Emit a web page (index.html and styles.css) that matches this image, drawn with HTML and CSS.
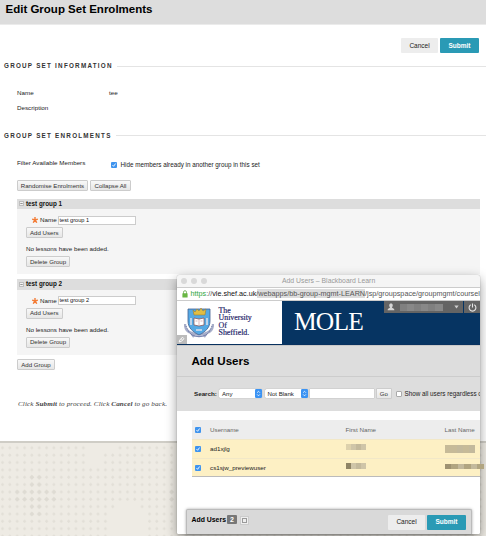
FILE: index.html
```html
<!DOCTYPE html>
<html lang="en">
<head>
<meta charset="utf-8">
<title>Edit Group Set Enrolments</title>
<link rel="stylesheet" href="styles.css">
</head>
<body>
<svg class="defs" width="0" height="0" aria-hidden="true">
  <symbol id="tick" viewBox="0 0 6 6"><rect width="6" height="6" rx="1" fill="#3f94ee"/><path d="M1.5 3.1l1.1 1.2 2-2.8" fill="none" stroke="#fff" stroke-width=".9"/></symbol>
  <symbol id="star" viewBox="0 0 6 6"><path d="M3 0v3M.1 2.1L3 3l2.9-.9M1.200 5.700L3 3l1.800 2.700" fill="none" stroke="#f37b35" stroke-width="1.400"/></symbol>
  <symbol id="minus" viewBox="0 0 5 5"><rect x=".4" y=".4" width="4.2" height="4.2" rx=".5" fill="#f2f2f2" stroke="#999" stroke-width=".6"/><path d="M1.3 2.5h2.4" stroke="#555" stroke-width=".6"/></symbol>
  <symbol id="updown" viewBox="0 0 7 9"><rect width="7" height="9" rx="1.2" fill="#3b93f3"/><path d="M2.1 3.7l1.4-1.4 1.4 1.4M2.1 5.4l1.4 1.4 1.4-1.4" fill="none" stroke="#fff" stroke-width=".8"/></symbol>
</svg>
<main class="page">
  <header class="page-head"><h1>Edit Group Set Enrolments</h1></header>
  <div class="actions"><button class="cancel">Cancel</button><button class="submit">Submit</button></div>
  <h2 class="section info"><span>GROUP SET INFORMATION</span></h2>
  <dl class="details">
    <dt>Name</dt><dd>tee</dd>
    <dt>Description</dt><dd></dd>
  </dl>
  <h2 class="section enrol"><span>GROUP SET ENROLMENTS</span></h2>
  <div class="filter"><span class="filter-label">Filter Available Members</span><svg class="check"><use href="#tick"/></svg><span class="filter-text">Hide members already in another group in this set</span></div>
  <div class="tools"><button class="btn b-random">Randomise Enrolments</button><button class="btn b-collapse">Collapse All</button></div>
  <section class="group">
    <h3><svg class="minus"><use href="#minus"/></svg>test group 1</h3>
    <div class="name-row"><svg class="star"><use href="#star"/></svg><span>Name</span><div class="field">test group 1</div></div>
    <button class="btn b-users">Add Users</button>
    <p>No lessons have been added.</p>
    <button class="btn b-delete">Delete Group</button>
  </section>
  <section class="group">
    <h3><svg class="minus"><use href="#minus"/></svg>test group 2</h3>
    <div class="name-row"><svg class="star"><use href="#star"/></svg><span>Name</span><div class="field">test group 2</div></div>
    <button class="btn b-users">Add Users</button>
    <p>No lessons have been added.</p>
    <button class="btn b-delete">Delete Group</button>
  </section>
  <button class="btn b-group">Add Group</button>
  <p class="hint">Click <b>Submit</b> to proceed. Click <b>Cancel</b> to go back.</p>
</main>
<svg class="texture" width="486" height="93" viewBox="0 0 486 93">
  <defs>
    <pattern id="dots" width="7.35" height="7.35" patternUnits="userSpaceOnUse"><path d="M2.5 3.1l1.7 1.8-1.7 1.8L.8 4.9z" fill="#e2dfd7"/></pattern>
    <pattern id="bold" width="7.35" height="7.35" patternUnits="userSpaceOnUse"><path d="M2.5 2.4L5 4.9 2.5 7.4 0 4.9z" fill="#dedbd3"/></pattern>
  </defs>
  <rect width="486" height="93" fill="#eeebe4"/>
  <rect width="486" height="93" fill="url(#dots)"/>
  <path d="M29.4 29.4h14.7v44.1H29.4zM14.7 44.1h44.1v14.7H14.7zM169 44.1h7.35v14.7H169z" fill="url(#bold)"/>
  <path d="M88.2 7.4h14.7v14.7H88.2zM88.2 0h29.400v7.4h-29.400zM110.2 66.2h36.8V93h-36.8zM117.6 59h22v8h-22z" fill="#eeebe4"/>
</svg>

<aside class="window">
  <div class="titlebar"><i></i><i></i><i></i><span>Add Users – Blackboard Learn</span></div>
  <div class="address">
    <svg width="6" height="8" viewBox="0 0 6 8"><path d="M1.5 4V2.2a1.5 1.5 0 0 1 3 0V4" fill="none" stroke="#7fb96a"/><rect x=".4" y="3.3" width="5.2" height="4.3" rx=".5" fill="#69b744"/></svg>
    <span class="url"><span class="sel"><em>https</em>://<b>vle.shef.ac.uk</b>/webapps/bb-group-mgmt-LEARN</span>/jsp/groupspace/groupmgmt/coursel</span>
  </div>
  <div class="banner">
    <div class="uni">
      <svg class="crest" width="30" height="33" viewBox="0 0 30 33">
        <path d="M1 18c0 5 2 8 6 9l3 4M29 18c0 5-2 8-6 9l-3 4M2 23c4 6 20 8 26 0" fill="none" stroke="#a7aec9" stroke-width="2.3"/>
        <path d="M2 20l3 6 4 4M28 20l-3 6-4 4" fill="none" stroke="#49568e" stroke-width=".8" stroke-dasharray="1 1"/>
        <path d="M4 3h22v12c0 7-5 11-11 14C9 26 4 22 4 15z" fill="#55a9e4" stroke="#42608f" stroke-width=".8"/>
        <path d="M9 4l2 2 2-3 2 2 2-3 2 3 3-2-1 6H10z" fill="#e1bd43" stroke="#93752f" stroke-width=".5"/>
        <path d="M10 12l5 1 5-1v7l-5 1-5-1z" fill="#fff" stroke="#874b4b" stroke-width=".7"/>
        <path d="M15 13v6M11.5 15h2M16.5 15h2" stroke="#c88" stroke-width=".6"/>
        <path d="M7 12v7M23 12v7M12 24h6" stroke="#d9dfed" stroke-width="1.6"/>
        <path d="M8 29q7 3 14 0" fill="none" stroke="#7c86b1" stroke-width="1.3"/>
      </svg>
      <div class="uni-name">The<br>University<br>Of<br>Sheffield.</div>
      <div class="edit"><svg width="9" height="9" viewBox="0 0 9 9"><path d="M2.2 7l.6-2L5.5 2.2 7 3.700 4.200 6.400zM4 3.600l1.600 1.500" fill="none" stroke="#fff" stroke-width=".9"/></svg></div>
    </div>
    <div class="mole"><span>MOLE</span>
      <div class="usermenu">
        <div class="user"><svg width="8" height="8" viewBox="0 0 8 8"><path d="M4 .5c2.300 0 2.100 2.700.9 4C5.500 5.200 7.400 5.300 7.400 7.200H.6c0-1.900 1.900-2 2.500-2.700C1.900 3.200 1.700.5 4 .5z" fill="#d5d5d5"/></svg><span class="masked"><i></i><i></i><i></i><i></i><i></i><i></i></span><svg width="5" height="4" viewBox="0 0 5 4"><path d="M.3.500h4.400L2.500 3.500z" fill="#ccc"/></svg></div>
        <div class="power"><svg width="9" height="9" viewBox="0 0 9 9"><path d="M2.700 1.800a3.400 3.400 0 1 0 3.600 0M4.500.4v4" fill="none" stroke="#e6e6e6" stroke-width="1.100"/></svg></div>
      </div>
    </div>
  </div>
  <h2 class="win-title">Add Users</h2>
  <div class="search">
    <b>Search:</b>
    <div class="select s1">Any<svg><use href="#updown"/></svg></div>
    <div class="select s2">Not Blank<svg><use href="#updown"/></svg></div>
    <div class="query"></div>
    <button class="btn go">Go</button>
    <i class="box"></i><span class="regardless">Show all users regardless of</span>
  </div>
  <div class="table">
    <div class="row head"><svg class="check"><use href="#tick"/></svg><span>Username</span><span>First Name</span><span>Last Name</span></div>
    <div class="row"><svg class="check"><use href="#tick"/></svg><span>ad1xjlg</span><span class="mask"><i></i><i></i><i></i><i></i></span><span class="mask m-last"><i></i><i></i><i></i><i></i><i></i></span></div>
    <div class="row"><svg class="check"><use href="#tick"/></svg><span>cs1sjw_previewuser</span><span class="mask m-dark"><i></i><i></i><i></i><i></i></span><span class="mask m-long"><i></i><i></i><i></i><i></i><i></i><i></i></span></div>
  </div>
  <footer class="tray"><b>Add Users</b><span class="count">2</span><span class="mini"><i></i></span><button class="cancel">Cancel</button><button class="submit">Submit</button></footer>
</aside>
</body>
</html>
```
FILE: styles.css
```css
* { box-sizing: border-box; }
body { margin: 0; width: 486px; height: 536px; overflow: hidden; position: relative; background: #eeebe4; font-family: "Liberation Sans", Arial, sans-serif; font-size: 6.25px; line-height: 8px; color: #222; }
h1, h2, h3, p, dl, dd { margin: 0; }
svg { display: block; flex: none; }
button { display: flex; align-items: center; justify-content: center; flex: none; margin: 0; padding: 0; font: inherit; white-space: nowrap; }
.defs { position: absolute; }

.page { height: 443px; background: #fff; border-bottom: 2px solid #cfcdc6; overflow: hidden; }
.page-head { height: 25px; background: #ddd; border-bottom: 1px solid #ebebeb; padding: 2px 0 0 5.5px; }
.page-head h1 { font-size: 11.5px; line-height: 14px; color: #000; white-space: nowrap; }
.actions { display: flex; justify-content: flex-end; gap: 2px; padding: 13px 7px 0 0; height: 37px; }
.cancel, .submit { height: 15px; border: 0; border-radius: 1px; font-size: 6.5px; }
.cancel { width: 37px; background: #ededed; color: #222; }
.submit { width: 39px; background: #2a9ab5; color: #fff; font-weight: bold; }
.section { display: flex; align-items: center; gap: 4px; height: 8px; padding-left: 4px; font-size: 6.3px; letter-spacing: 1.24px; color: #333; white-space: nowrap; }
.section::after { content: ""; flex: 1; height: 1px; background: #e4e4e4; }
.details { display: grid; grid-template-columns: 92px 1fr; align-content: start; row-gap: 6.5px; padding: 19px 0 0 17px; height: 61.5px; }
.filter { display: flex; height: 40.500px; padding: 19px 0 0 17px; }
.filter-label { width: 94px; }
.filter .check { margin-top: 3px; }
.filter-text { margin: 2px 0 0 3.500px; white-space: nowrap; font-size: 6.300px; }
.check { width: 6px; height: 6px; }
.tools { display: flex; gap: 2px; height: 18.500px; padding-left: 17px; }
.btn { height: 11px; border: 1px solid #ccc; border-radius: 1px; background: linear-gradient(#f8f8f8, #e6e6e6); color: #333; font-size: 6.100px; }
.b-random { width: 71px; }
.b-collapse { width: 41px; }
.group { width: 463px; height: 75.500px; margin: 0 0 5px 17px; background: #f5f5f5; }
.group h3 { display: flex; align-items: center; height: 10.500px; padding-left: 2px; gap: 2px; background: #ddd; font-size: 6.300px; color: #111; }
.minus { width: 5px; height: 5px; }
.name-row { display: flex; align-items: center; height: 10px; margin: 6px 0 2px 15px; }
.star { width: 6px; height: 6px; margin-right: 2px; }
.name-row span { width: 17.500px; line-height: 8px; }
.field { width: 78px; height: 9px; border: 1px solid #ccc; background: #fff; padding-left: 1px; font-size: 5.600px; line-height: 7.500px; color: #111; }
.group .btn { margin-left: 9px; }
.b-users { width: 36.500px; }
.group p { height: 8px; margin: 7px 0 3px 9px; }
.b-delete { width: 44px; }
.b-group { width: 38px; margin: -.5px 0 0 17px; }
.hint { margin: 30px 0 0 18px; font: italic 7.150px/8px "Liberation Serif", serif; color: #444; white-space: nowrap; letter-spacing: .1px; }
.texture { width: 486px; height: 93px; }

.window { position: absolute; left: 177px; top: 275px; width: 303px; height: 259px; border-radius: 3px 3px 1px 1px; background: #fff; box-shadow: 0 4px 12px rgba(0,0,0,.4), 0 0 1px rgba(0,0,0,.5); }
.titlebar { display: flex; align-items: center; gap: 4px; height: 12px; padding-left: 4px; background: #f5f5f5; border-radius: 3px 3px 0 0; color: #999; font-size: 6.850px; white-space: nowrap; }
.titlebar i { width: 6px; height: 6px; border-radius: 50%; background: #d9d9d9; }
.titlebar span { margin-left: 71px; }
.address { display: flex; align-items: center; gap: 3px; height: 14px; padding: 0 0 1px 4.500px; border-top: 1px solid #ccc; border-bottom: 1px solid #ccc; overflow: hidden; }
.url { font-size: 7.220px; line-height: 9px; white-space: nowrap; color: #555; }
.url em { color: #30a53b; font-style: normal; }
.url b { color: #111; font-weight: normal; }
.sel { background: linear-gradient(90deg, transparent 38%, #ddd 38%); }
.banner { display: flex; height: 44px; border-bottom: 1.500px solid #08315f; }
.uni { display: flex; position: relative; width: 105px; padding: 4.500px 0 0 7px; }
.uni-name { margin: 1.500px 0 0 4.500px; font: 7.900px/7.400px "Liberation Serif", serif; color: #27286b; -webkit-text-stroke: .2px #27286b; }
.edit { position: absolute; left: 0; bottom: 0; width: 10px; height: 9px; background: #bbb; }
.mole { display: flex; justify-content: space-between; flex: 1; background: #063462; color: #fff; }
.mole > span { padding-left: 12px; font: 25.500px/41px "Liberation Serif", serif; letter-spacing: -.8px; }
.usermenu { display: flex; gap: 1px; height: 12px; }
.user, .power { display: flex; align-items: center; background: #646464; }
.user { width: 79px; padding: 0 4px 0 3px; justify-content: space-between; }
.power { width: 16px; justify-content: center; }
.masked { display: flex; width: 43px; height: 7px; margin-right: 7px; }
.masked i { flex: 1; background: #808080; }
.masked i:nth-child(even) { background: #888; }
.win-title { height: 32px; padding: 8px 0 0 14.500px; background: #ddd; border-top: 1px solid #c9c9c9; border-bottom: 1px solid #ccc; font-size: 11.600px; line-height: 13px; color: #000; }
.search { display: flex; align-items: center; height: 33.500px; padding-left: 17px; background: #ddd; overflow: hidden; white-space: nowrap; }
.search > * { flex: none; }
.search b { width: 25px; color: #222; }
.select { display: flex; align-items: center; justify-content: space-between; height: 9px; padding-left: 3px; background: #fff; border-radius: 1.500px; box-shadow: 0 0 1px #888; font-size: 6.100px; }
.select svg { width: 7px; height: 9px; }
.s1 { width: 43px; }
.s2 { width: 43.500px; margin-left: 2.500px; }
.query { width: 64px; height: 9px; margin-left: 1.500px; background: #fff; box-shadow: 0 0 1px #999; }
.go { width: 16.500px; margin-left: 2px; }
.box { width: 6px; height: 6px; margin: 0 3px 0 3.500px; border: 1px solid #aaa; border-radius: 1px; background: #fff; }
.regardless { font-size: 6.300px; }
.table { margin: 9.500px 0 0 14.500px; border-bottom: 1px solid #bbb; }
.row { display: grid; grid-template-columns: 15.500px 135.500px 99px 1fr; align-items: center; height: 18.700px; padding-left: 3px; background: #fdf0c4; border-top: 1px solid #f2e8c8; color: #222; white-space: nowrap; }
.row.head { height: 19px; background: #ededed; border: 0; color: #666; }
.mask { display: flex; width: 20px; height: 6px; margin-top: -3px; }
.mask i { flex: 1; background: #cfc5a8; }
.mask i:nth-child(odd) { background: #c3b99c; }
.mask i:first-child { background: #ddd1ac; }
.m-last { width: 30px; height: 8px; margin-top: 0; }
.m-last i, .m-last i:first-child { background: #c6ba98; }
.m-dark i:first-child { background: #8f8465; }
.m-long { width: 39px; height: 5px; }
.m-long i, .m-long i:first-child { background: #9e9272; }
.m-long i:nth-child(even) { background: #b1a581; }
.tray { display: flex; width: 286px; height: 25.500px; margin: 31.600px 0 0 9px; padding: 5px 5px 0 4.500px; background: #d9d9d9; border: 1px solid #bbb; border-bottom: 0; border-radius: 2px 2px 0 0; box-shadow: 0 0 3px rgba(0,0,0,.35); }
.tray b { width: 35.500px; font-size: 6.900px; line-height: 9px; color: #000; white-space: nowrap; }
.count { width: 10px; height: 9px; border-radius: 1px; background: #777; color: #fff; font-weight: bold; font-size: 7px; line-height: 9px; text-align: center; }
.mini { display: flex; align-items: center; justify-content: center; width: 9px; height: 9px; margin: 1px 0 0 2.500px; border: .5px solid #ccc; background: #eee; }
.mini i { width: 5px; height: 5px; border: 1px solid #999; }
.tray .cancel { margin-left: auto; margin-right: 2px; }
```
